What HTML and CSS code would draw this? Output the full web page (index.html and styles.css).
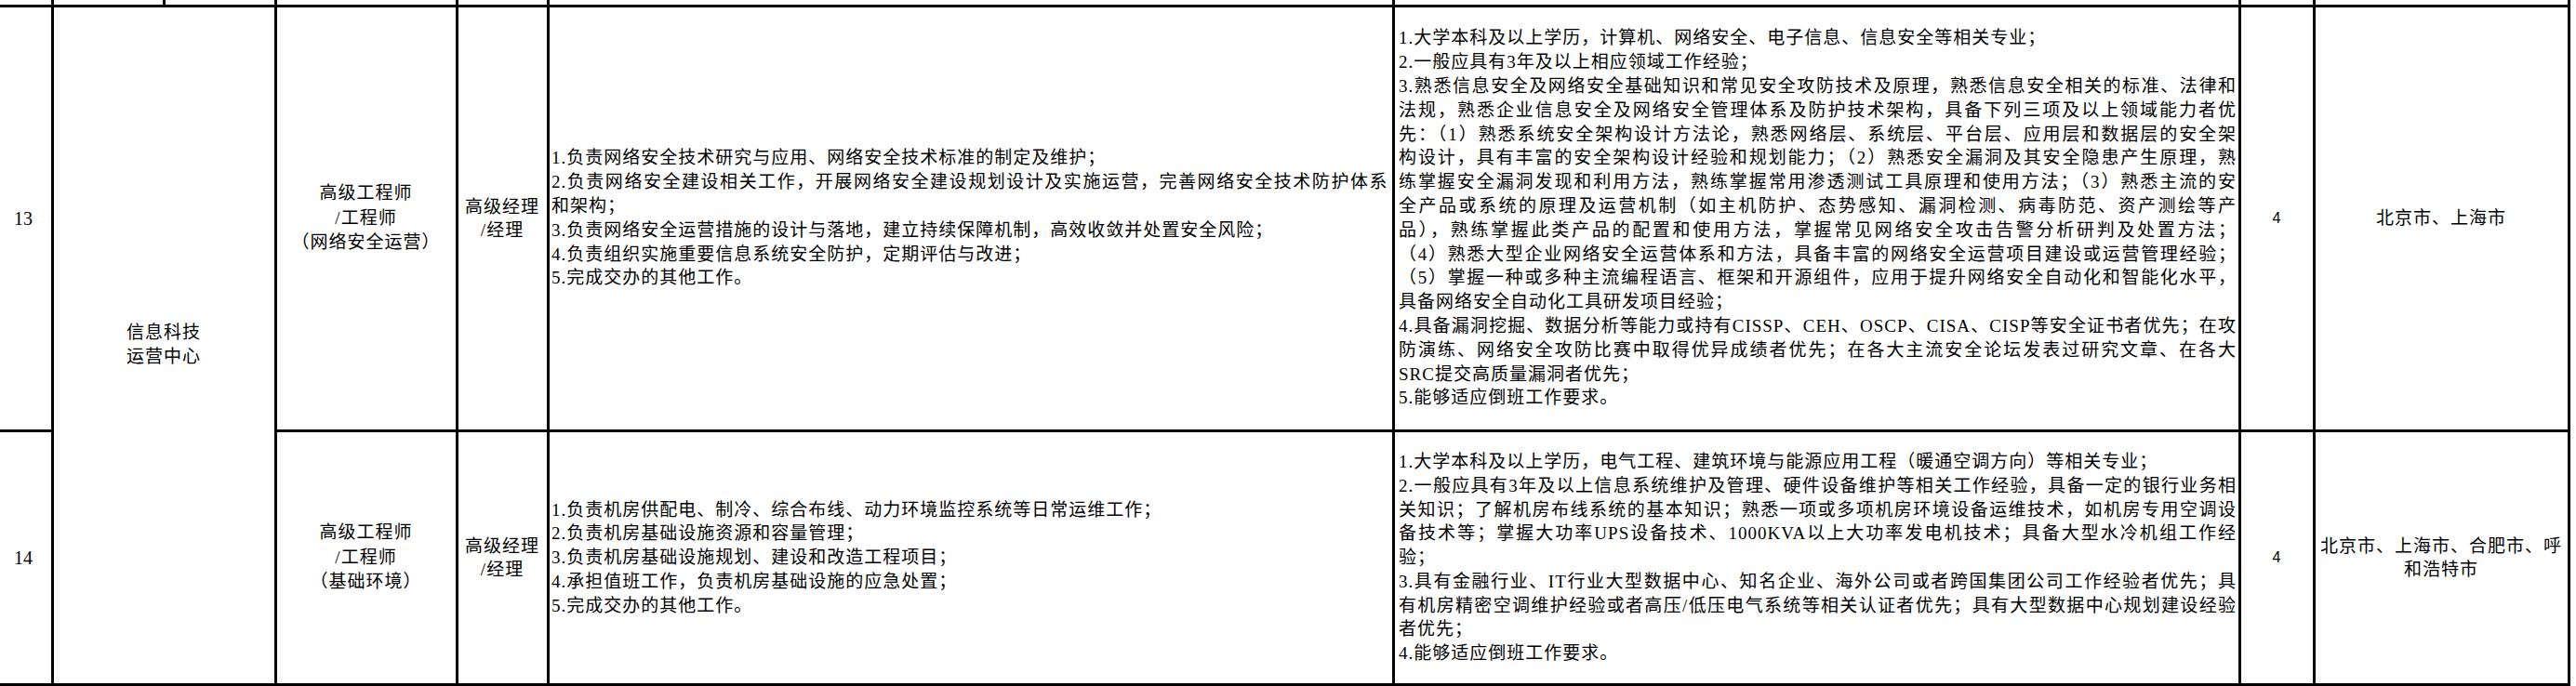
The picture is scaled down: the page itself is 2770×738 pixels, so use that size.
FILE: index.html
```html
<!DOCTYPE html>
<html lang="zh-CN">
<head>
<meta charset="utf-8">
<title>岗位表</title>
<link rel="stylesheet" href="styles.css">
</head>
<body>
<table class="sheet">
  <colgroup>
    <col class="c-num">
    <col class="c-dept-a">
    <col class="c-dept-b">
    <col class="c-title">
    <col class="c-level">
    <col class="c-resp">
    <col class="c-req">
    <col class="c-count">
    <col class="c-city">
  </colgroup>
  <tr class="prev">
    <td></td><td></td><td></td><td></td><td></td><td></td><td></td><td></td><td></td>
  </tr>
  <tr class="r13">
    <td class="num">13</td>
    <td class="dept" colspan="2" rowspan="2">信息科技<br>运营中心</td>
    <td class="title">高级工程师<br>/工程师<br>（网络安全运营）</td>
    <td class="level">高级经理<br>/经理</td>
    <td class="text resp">
      <div class="line">1.负责网络安全技术研究与应用、网络安全技术标准的制定及维护；</div>
      <div class="line j">2.负责网络安全建设相关工作，开展网络安全建设规划设计及实施运营，完善网络安全技术防护体系</div>
      <div class="line">和架构；</div>
      <div class="line">3.负责网络安全运营措施的设计与落地，建立持续保障机制，高效收敛并处置安全风险；</div>
      <div class="line">4.负责组织实施重要信息系统安全防护，定期评估与改进；</div>
      <div class="line">5.完成交办的其他工作。</div>
    </td>
    <td class="text req">
      <div class="line">1.大学本科及以上学历，计算机、网络安全、电子信息、信息安全等相关专业；</div>
      <div class="line">2.一般应具有3年及以上相应领域工作经验；</div>
      <div class="line j">3.熟悉信息安全及网络安全基础知识和常见安全攻防技术及原理，熟悉信息安全相关的标准、法律和</div>
      <div class="line j">法规，熟悉企业信息安全及网络安全管理体系及防护技术架构，具备下列三项及以上领域能力者优</div>
      <div class="line j">先：（1）熟悉系统安全架构设计方法论，熟悉网络层、系统层、平台层、应用层和数据层的安全架</div>
      <div class="line j">构设计，具有丰富的安全架构设计经验和规划能力；（2）熟悉安全漏洞及其安全隐患产生原理，熟</div>
      <div class="line j">练掌握安全漏洞发现和利用方法，熟练掌握常用渗透测试工具原理和使用方法；（3）熟悉主流的安</div>
      <div class="line j">全产品或系统的原理及运营机制（如主机防护、态势感知、漏洞检测、病毒防范、资产测绘等产</div>
      <div class="line j">品），熟练掌握此类产品的配置和使用方法，掌握常见网络安全攻击告警分析研判及处置方法；</div>
      <div class="line j">（4）熟悉大型企业网络安全运营体系和方法，具备丰富的网络安全运营项目建设或运营管理经验；</div>
      <div class="line j">（5）掌握一种或多种主流编程语言、框架和开源组件，应用于提升网络安全自动化和智能化水平，</div>
      <div class="line">具备网络安全自动化工具研发项目经验；</div>
      <div class="line j">4.具备漏洞挖掘、数据分析等能力或持有CISSP、CEH、OSCP、CISA、CISP等安全证书者优先；在攻</div>
      <div class="line j">防演练、网络安全攻防比赛中取得优异成绩者优先；在各大主流安全论坛发表过研究文章、在各大</div>
      <div class="line">SRC提交高质量漏洞者优先；</div>
      <div class="line">5.能够适应倒班工作要求。</div>
    </td>
    <td class="count">4</td>
    <td class="city">北京市、上海市</td>
  </tr>
  <tr class="r14">
    <td class="num">14</td>
    <td class="title">高级工程师<br>/工程师<br>（基础环境）</td>
    <td class="level">高级经理<br>/经理</td>
    <td class="text resp">
      <div class="line">1.负责机房供配电、制冷、综合布线、动力环境监控系统等日常运维工作；</div>
      <div class="line">2.负责机房基础设施资源和容量管理；</div>
      <div class="line">3.负责机房基础设施规划、建设和改造工程项目；</div>
      <div class="line">4.承担值班工作，负责机房基础设施的应急处置；</div>
      <div class="line">5.完成交办的其他工作。</div>
    </td>
    <td class="text req">
      <div class="line">1.大学本科及以上学历，电气工程、建筑环境与能源应用工程（暖通空调方向）等相关专业；</div>
      <div class="line j">2.一般应具有3年及以上信息系统维护及管理、硬件设备维护等相关工作经验，具备一定的银行业务相</div>
      <div class="line j">关知识；了解机房布线系统的基本知识；熟悉一项或多项机房环境设备运维技术，如机房专用空调设</div>
      <div class="line j">备技术等；掌握大功率UPS设备技术、1000KVA以上大功率发电机技术；具备大型水冷机组工作经</div>
      <div class="line">验；</div>
      <div class="line j">3.具有金融行业、IT行业大型数据中心、知名企业、海外公司或者跨国集团公司工作经验者优先；具</div>
      <div class="line j">有机房精密空调维护经验或者高压/低压电气系统等相关认证者优先；具有大型数据中心规划建设经验</div>
      <div class="line">者优先；</div>
      <div class="line">4.能够适应倒班工作要求。</div>
    </td>
    <td class="count">4</td>
    <td class="city">北京市、上海市、合肥市、呼和浩特市</td>
  </tr>
</table>
</body>
</html>
```

FILE: styles.css
```css
* {
  box-sizing: border-box;
}

html,
body {
  margin: 0;
  padding: 0;
  background: #ffffff;
}

body {
  width: 2770px;
  height: 738px;
  overflow: hidden;
  font-family: "Liberation Serif", "Noto Sans CJK SC", serif;
  color: #000000;
}

.sheet {
  border-collapse: collapse;
  table-layout: fixed;
  width: 2768px;
  margin: -35.5px 0 0 -7.5px;
}

.c-num { width: 62px; }
.c-dept-a { width: 120px; }
.c-dept-b { width: 120px; }
.c-title { width: 195px; }
.c-level { width: 98px; }
.c-resp { width: 909px; }
.c-req { width: 910px; }
.c-count { width: 80px; }
.c-city { width: 274px; }

.sheet td {
  border: 3px solid #000000;
  padding: 0;
  vertical-align: middle;
  text-align: center;
  font-size: 19px;
  font-weight: 400;
  letter-spacing: 1px;
  line-height: 26.5px;
}

.prev {
  height: 40px;
}

.r13 {
  height: 457.5px;
}

.r14 {
  height: 273px;
}

.sheet td.num {
  font-size: 20px;
  letter-spacing: 0;
}

.sheet td.level {
  line-height: 25px;
  padding: 0 2px;
}

.sheet td.count {
  font-family: "Liberation Sans", "Noto Sans CJK SC", sans-serif;
  font-size: 16px;
  letter-spacing: 0;
}

.sheet td.city {
  font-family: "Liberation Sans", "Noto Sans CJK SC", sans-serif;
  padding: 0 2px;
  line-height: 25px;
}

.sheet td.text {
  text-align: left;
  line-height: 25.8px;
}

.sheet td.resp {
  padding: 0 4px 0 2.5px;
}

.sheet td.req {
  padding: 0 1.5px 0 4.5px;
}

.line {
  text-align: left;
}

.line.j {
  text-align: justify;
  text-align-last: justify;
}
```
